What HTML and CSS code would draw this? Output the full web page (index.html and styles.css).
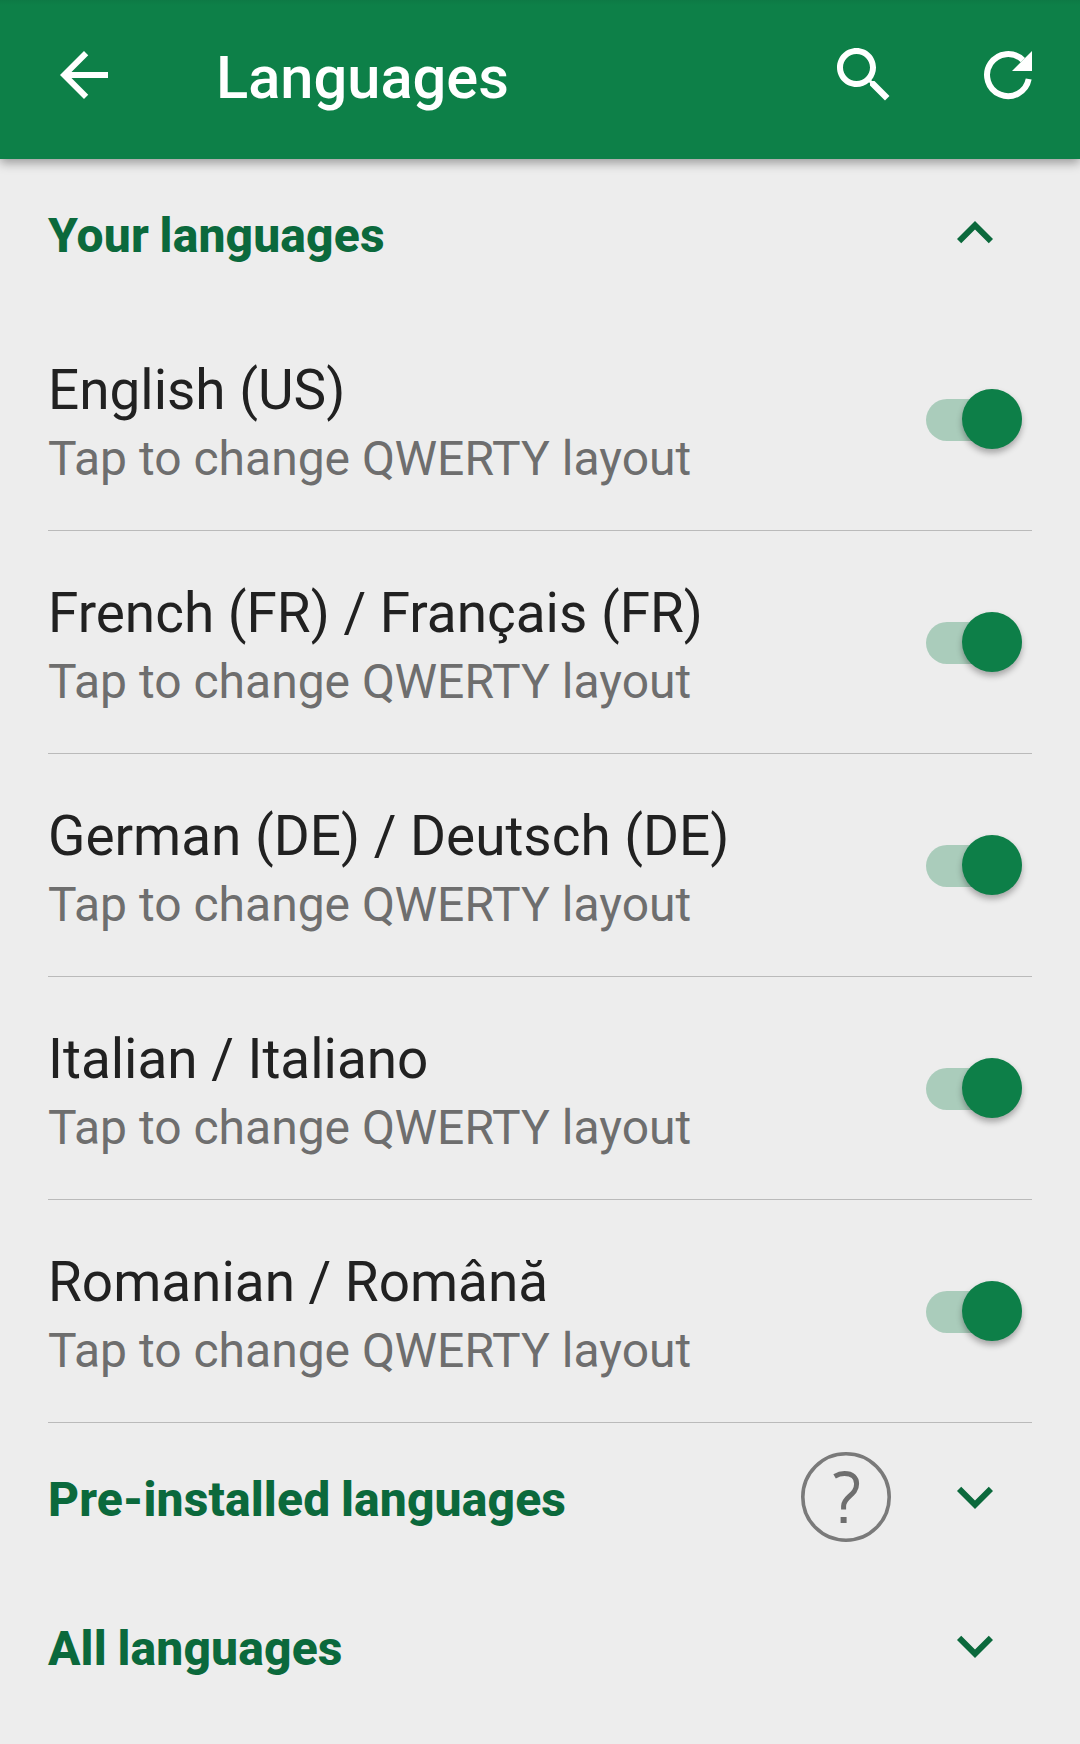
FILE: index.html
```html
<!DOCTYPE html>
<html lang="en">
<head>
    <meta charset="UTF-8">
    <meta name="viewport" content="width=device-width, initial-scale=1.0">
    <title>Languages</title>
    <link rel="stylesheet" href="styles.css">
</head>
<body>
    <!-- App bar -->
    <header class="app-bar">
        <svg class="icon" viewBox="0 0 24 24"><path d="M20 11H7.83l5.59-5.59L12 4l-8 8 8 8 1.41-1.41L7.83 13H20v-2z"/></svg>
        <h1 class="title">Languages</h1>
        <svg class="icon" viewBox="0 0 24 24"><path d="M15.5 14h-.79l-.28-.27C15.41 12.59 16 11.11 16 9.5 16 5.91 13.09 3 9.5 3S3 5.91 3 9.5 5.91 16 9.5 16c1.61 0 3.09-.59 4.23-1.57l.27.28v.79l5 4.99L20.49 19l-4.99-5zm-6 0C7.01 14 5 11.99 5 9.5S7.01 5 9.5 5 14 7.01 14 9.5 11.99 14 9.5 14z"/></svg>
        <svg class="icon" viewBox="0 0 72 72"><path d="M56.7 40A21 21 0 1 1 50.9 21.2" class="arc"/><path d="M60 12v20H40z"/></svg>
    </header>

    <main class="content">
        <!-- Enabled languages -->
        <div class="section">
            <h2 class="section-title">Your languages</h2>
            <svg class="icon" viewBox="0 0 24 24"><path d="M12 8l-6 6 1.41 1.41L12 10.83l4.59 4.58L18 14z"/></svg>
        </div>

        <div class="row">
            <div class="text">
                <div class="name">English (US)</div>
                <div class="hint">Tap to change QWERTY layout</div>
            </div>
            <div class="toggle"><div class="thumb"></div></div>
        </div>
        <div class="row">
            <div class="text">
                <div class="name">French (FR) / Français (FR)</div>
                <div class="hint">Tap to change QWERTY layout</div>
            </div>
            <div class="toggle"><div class="thumb"></div></div>
        </div>
        <div class="row">
            <div class="text">
                <div class="name">German (DE) / Deutsch (DE)</div>
                <div class="hint">Tap to change QWERTY layout</div>
            </div>
            <div class="toggle"><div class="thumb"></div></div>
        </div>
        <div class="row">
            <div class="text">
                <div class="name">Italian / Italiano</div>
                <div class="hint">Tap to change QWERTY layout</div>
            </div>
            <div class="toggle"><div class="thumb"></div></div>
        </div>
        <div class="row">
            <div class="text">
                <div class="name">Romanian / Română</div>
                <div class="hint">Tap to change QWERTY layout</div>
            </div>
            <div class="toggle"><div class="thumb"></div></div>
        </div>

        <!-- Collapsed sections -->
        <div class="section">
            <h2 class="section-title">Pre-installed languages</h2>
            <svg class="help" viewBox="0 0 90 90">
                <circle cx="45" cy="45" r="43.2"/>
                <path d="M33.6 24.3Q38.5 21.5 43.5 21.5C51.5 21.5 55.6 25.6 55.6 31.8C55.6 43.5 42.6 44.5 42.6 54V57.6"/>
                <path d="M42.6 65v6" class="dot"/>
            </svg>
            <svg class="icon" viewBox="0 0 24 24"><path d="M16.59 8.59L12 13.17 7.41 8.59 6 10l6 6 6-6z"/></svg>
        </div>
        <div class="section">
            <h2 class="section-title">All languages</h2>
            <svg class="icon" viewBox="0 0 24 24"><path d="M16.59 8.59L12 13.17 7.41 8.59 6 10l6 6 6-6z"/></svg>
        </div>
    </main>
</body>
</html>
```
FILE: styles.css
```css
* {
    box-sizing: border-box;
}

body {
    margin: 0;
    height: 1744px;
    font-family: Roboto, sans-serif;
    background-color: #ededed;
    color: #212121;
    overflow: hidden;
}

h1, h2 {
    margin: 0;
}

.icon {
    width: 72px;
    height: 72px;
    flex: none;
    fill: currentColor;
}

/* App bar */
.app-bar {
    display: flex;
    align-items: center;
    height: 159px;
    padding: 0 36px 9px 48px;
    background: linear-gradient(#0d7a45, #0d8048 5px);
    color: #fff;
    box-shadow: 0 4px 10px rgba(0, 0, 0, 0.35);
}

.title {
    flex: 1;
    padding-top: 5px;
    margin-left: 96px;
    font-size: 59.6px;
    font-weight: 500;
    line-height: 70px;
}

.app-bar .icon:last-child {
    margin-left: 72px;
}

.arc {
    fill: none;
    stroke: currentColor;
    stroke-width: 6;
}

/* Section headings */
.content {
    padding: 0 48px;
}

.section {
    display: flex;
    align-items: center;
    height: 149px;
    padding-right: 21px;
    padding-bottom: 2px;
    color: #0b693c;
}

.section-title {
    flex: 1;
    padding-top: 7px;
    font-size: 48px;
    font-weight: 850;
    line-height: 56px;
    letter-spacing: 0.15px;
    word-spacing: -1.5px;
}

.help {
    width: 90px;
    height: 90px;
    margin-right: 48px;
    fill: none;
    stroke: #7a7a7a;
    stroke-width: 3.6;
}

.help path {
    stroke: #6e6e6e;
    stroke-width: 5;
}

.help .dot {
    stroke-width: 6;
}

/* Language rows */
.row {
    display: flex;
    align-items: center;
    justify-content: space-between;
    height: 223px;
    padding-right: 10.5px;
    border-bottom: 1px solid #bababa;
}

.text {
    padding-top: 7px;
}

.name {
    margin-bottom: 9px;
    font-size: 54.9px;
    line-height: 63px;
}

.hint {
    font-size: 48px;
    line-height: 56px;
    color: #6e6e6e;
}

.toggle {
    display: flex;
    align-items: center;
    justify-content: flex-end;
    width: 95.5px;
    height: 42px;
    margin-top: 1px;
    border-radius: 21px;
    background-color: #aaccbb;
}

.thumb {
    width: 60px;
    height: 60px;
    flex: none;
    margin-bottom: 1px;
    border-radius: 50%;
    background-color: #0d7f48;
    box-shadow: 0 4px 6px rgba(0, 0, 0, 0.3);
}
```
